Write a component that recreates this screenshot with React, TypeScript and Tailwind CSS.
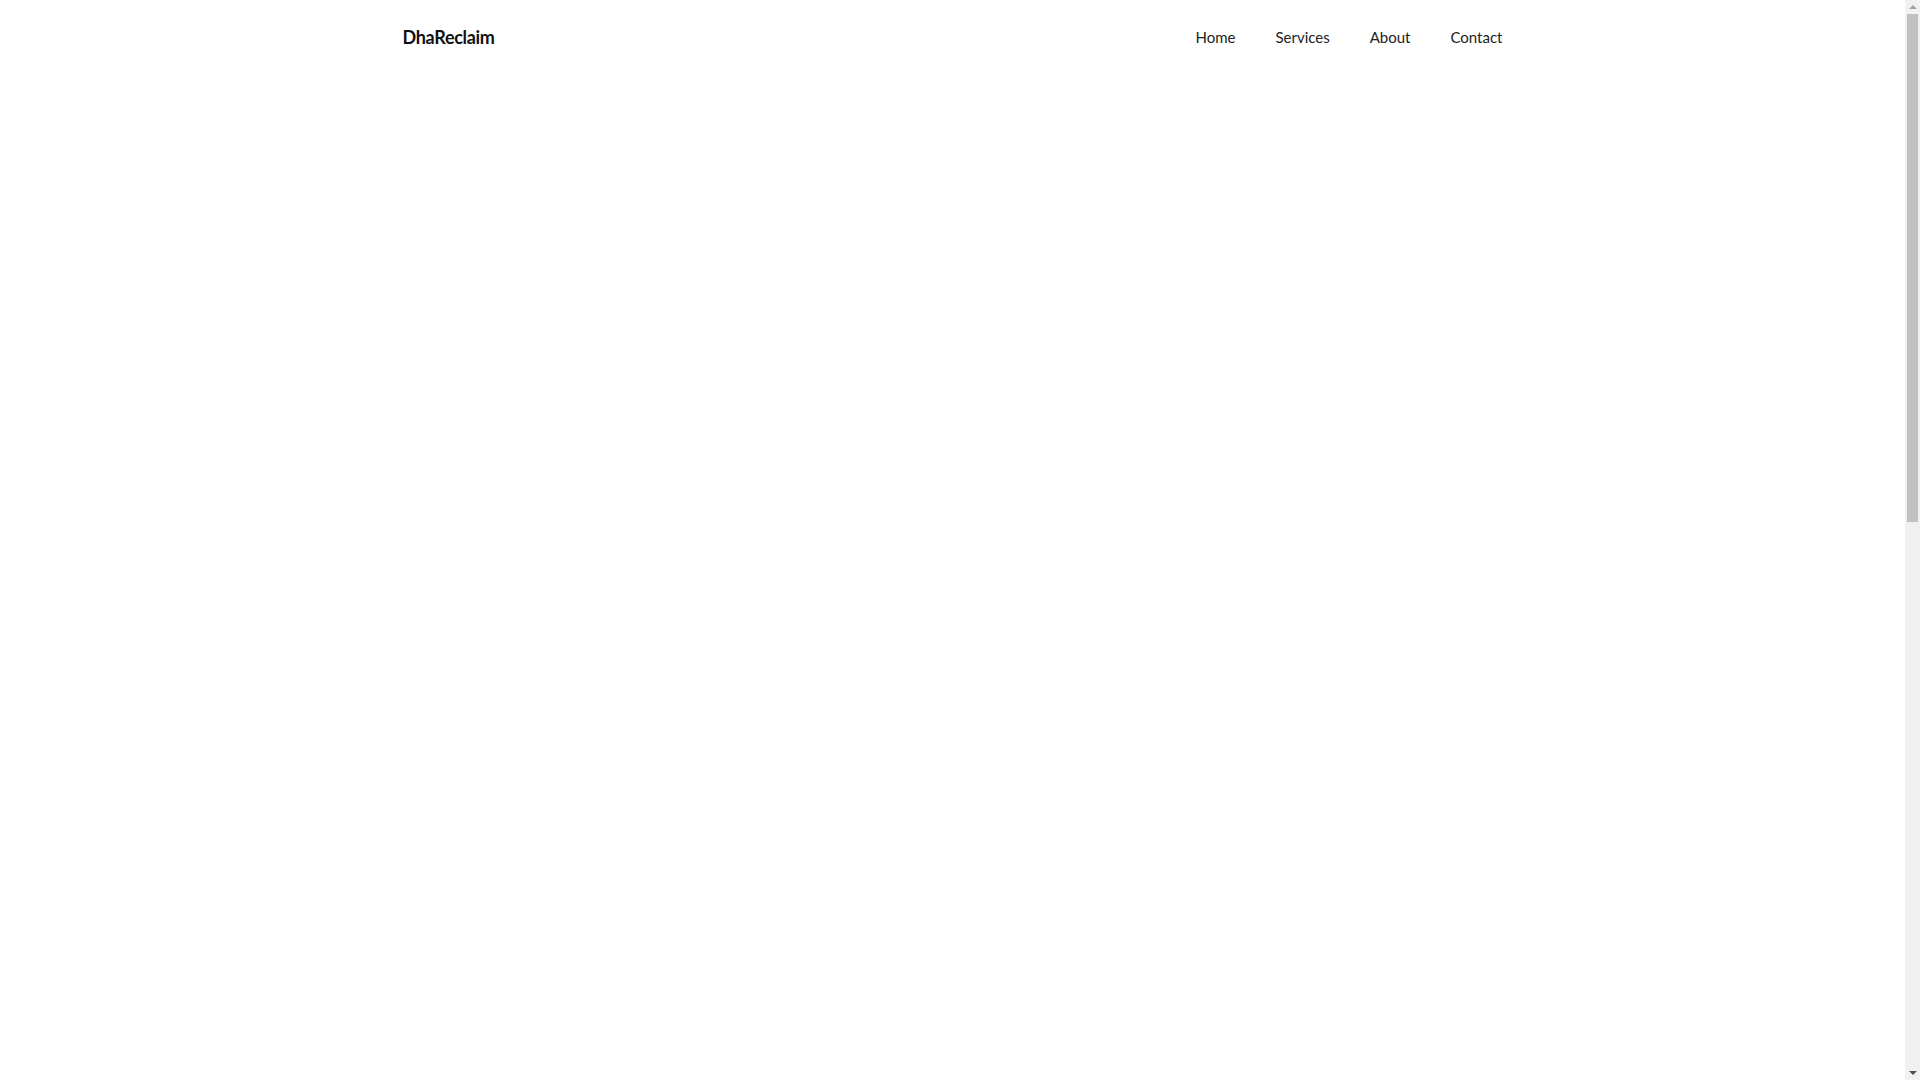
import React from 'react';

const links = ["Home", "Services", "About", "Contact"];

const App = () => {
    return (
        <div className="flex h-screen bg-white font-['Lato','Open_Sans',sans-serif] text-[#222]">
            <div className="flex-1">
                <header className="w-full">
                    <div className="mx-auto flex h-[74px] max-w-[1140px] items-center justify-between px-5">
                        <a href="#" className="text-[18px] font-bold tracking-[-0.3px] text-[#111]">DhaReclaim</a>
                        <nav className="flex items-center">
                            {links.map((link) => (
                                <a key={link} href="#" className="px-[20px] text-[15px] text-[#222] last:pr-0">
                                    {link}
                                </a>
                            ))}
                        </nav>
                    </div>
                </header>
                <main></main>
            </div>
            {/* scroll gutter */}
            <div className="flex w-[15px] flex-col items-center bg-[#f1f1f1]">
                <div className="mt-[5px] h-0 w-0 border-x-[4px] border-b-[4px] border-x-transparent border-b-[#a3a3a3]"></div>
                <div className="mt-[5px] h-[508px] w-[11px] bg-[#c1c1c1]"></div>
                <div className="flex-1"></div>
                <div className="mb-[5px] h-0 w-0 border-x-[4px] border-t-[4px] border-x-transparent border-t-[#505050]"></div>
            </div>
        </div>
    )
}

export default App;
